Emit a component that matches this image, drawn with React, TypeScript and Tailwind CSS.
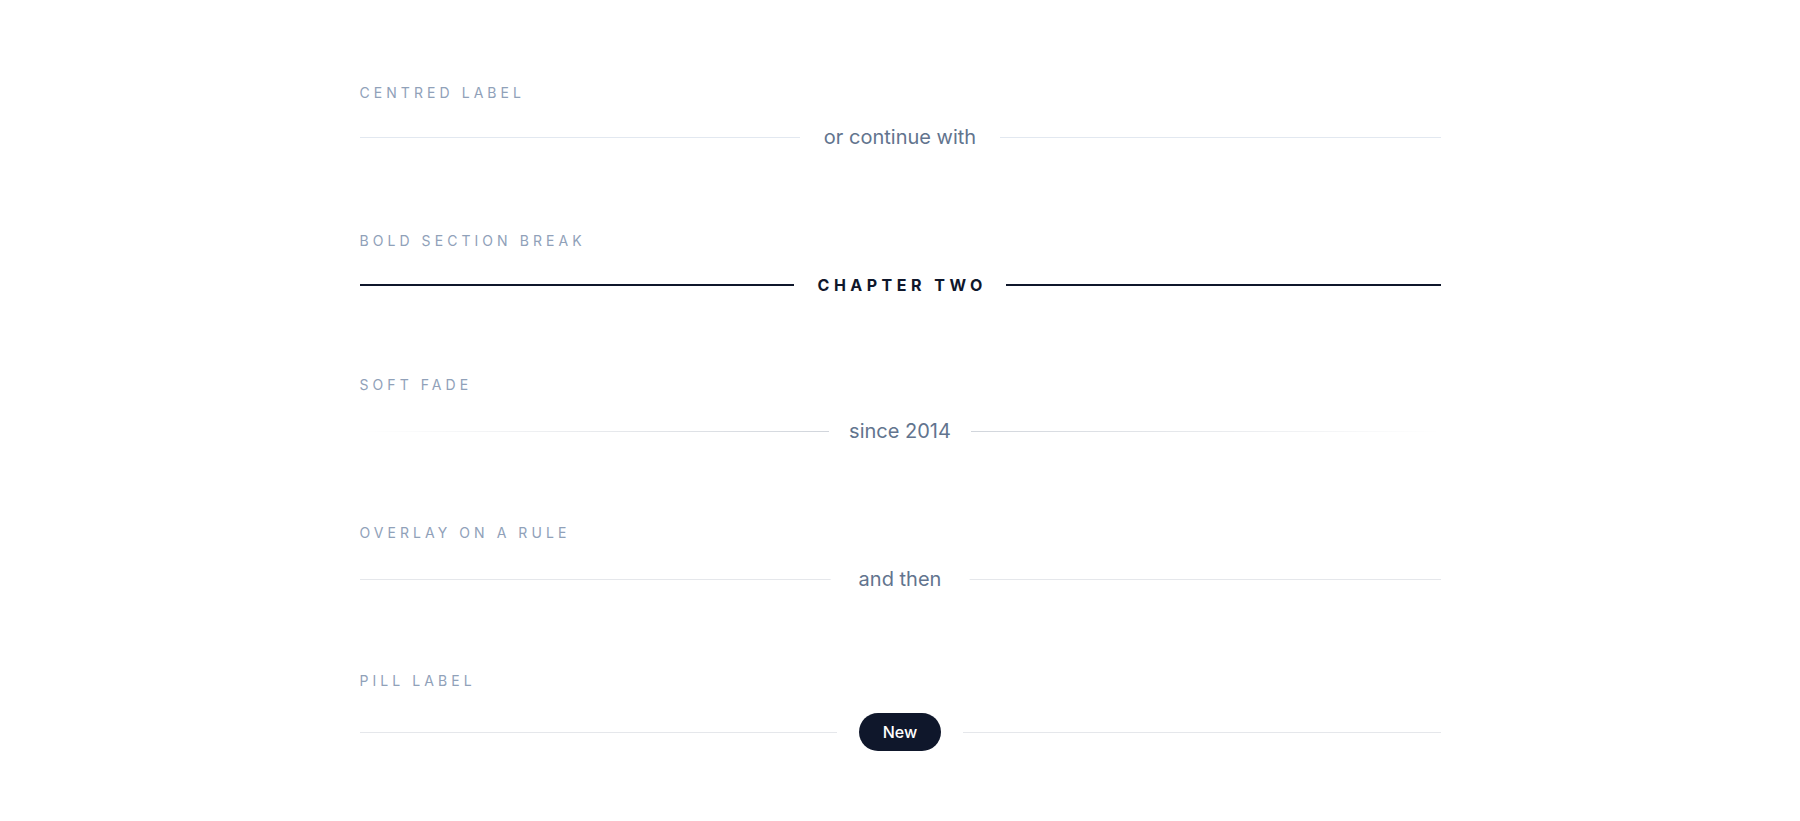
import type { ReactNode } from 'react';

function Section({ label, children }: { label: string; children: ReactNode }) {
  return (
    <section>
      <p className="mb-[22px] text-[14px] leading-5 uppercase tracking-[0.29em] text-slate-400">{label}</p>
      {children}
    </section>
  );
}

export default function App() {
  return (
    <div className="min-h-screen bg-white font-['Inter',sans-serif]">
      <div className="mx-auto flex max-w-[1081px] flex-col gap-[78px] pt-[83px] pb-20">
        {/* plain rules either side of the text */}
        <Section label="Centred label">
          <div className="-mt-[2px] mb-[2px] flex items-center gap-6">
            <div className="h-px flex-1 bg-slate-200" />
            <span className="text-xl leading-7 text-slate-500">or continue with</span>
            <div className="h-px flex-1 bg-slate-200" />
          </div>
        </Section>

        {/* heavy rules, bold spaced caps */}
        <Section label="Bold section break">
          <div className="flex items-center gap-6">
            <div className="h-[2px] flex-1 bg-slate-900" />
            <span className="-mr-[0.28em] text-base leading-6 font-bold uppercase tracking-[0.28em] text-slate-900">Chapter two</span>
            <div className="h-[2px] flex-1 bg-slate-900" />
          </div>
        </Section>

        {/* rules that fade out to the edges */}
        <Section label="Soft fade">
          <div className="flex items-center gap-5">
            <div className="h-px flex-1 bg-gradient-to-r from-transparent to-gray-300" />
            <span className="text-xl leading-7 text-slate-500">since 2014</span>
            <div className="h-px flex-1 bg-gradient-to-l from-transparent to-gray-300" />
          </div>
        </Section>

        {/* one rule, text sits on top with a white backing */}
        <Section label="Overlay on a rule">
          <div className="relative flex h-7 items-center">
            <div className="h-px w-full bg-gray-200" />
            <span className="absolute left-1/2 -translate-x-1/2 bg-white px-7 text-xl leading-7 text-slate-500">and then</span>
          </div>
        </Section>

        <Section label="Pill label">
          <div className="flex items-center gap-[22px]">
            <div className="h-px flex-1 bg-gray-200" />
            <span className="flex h-[38px] items-center rounded-full bg-slate-900 px-6 text-base font-medium text-white">New</span>
            <div className="h-px flex-1 bg-gray-200" />
          </div>
        </Section>
      </div>
    </div>
  );
}
